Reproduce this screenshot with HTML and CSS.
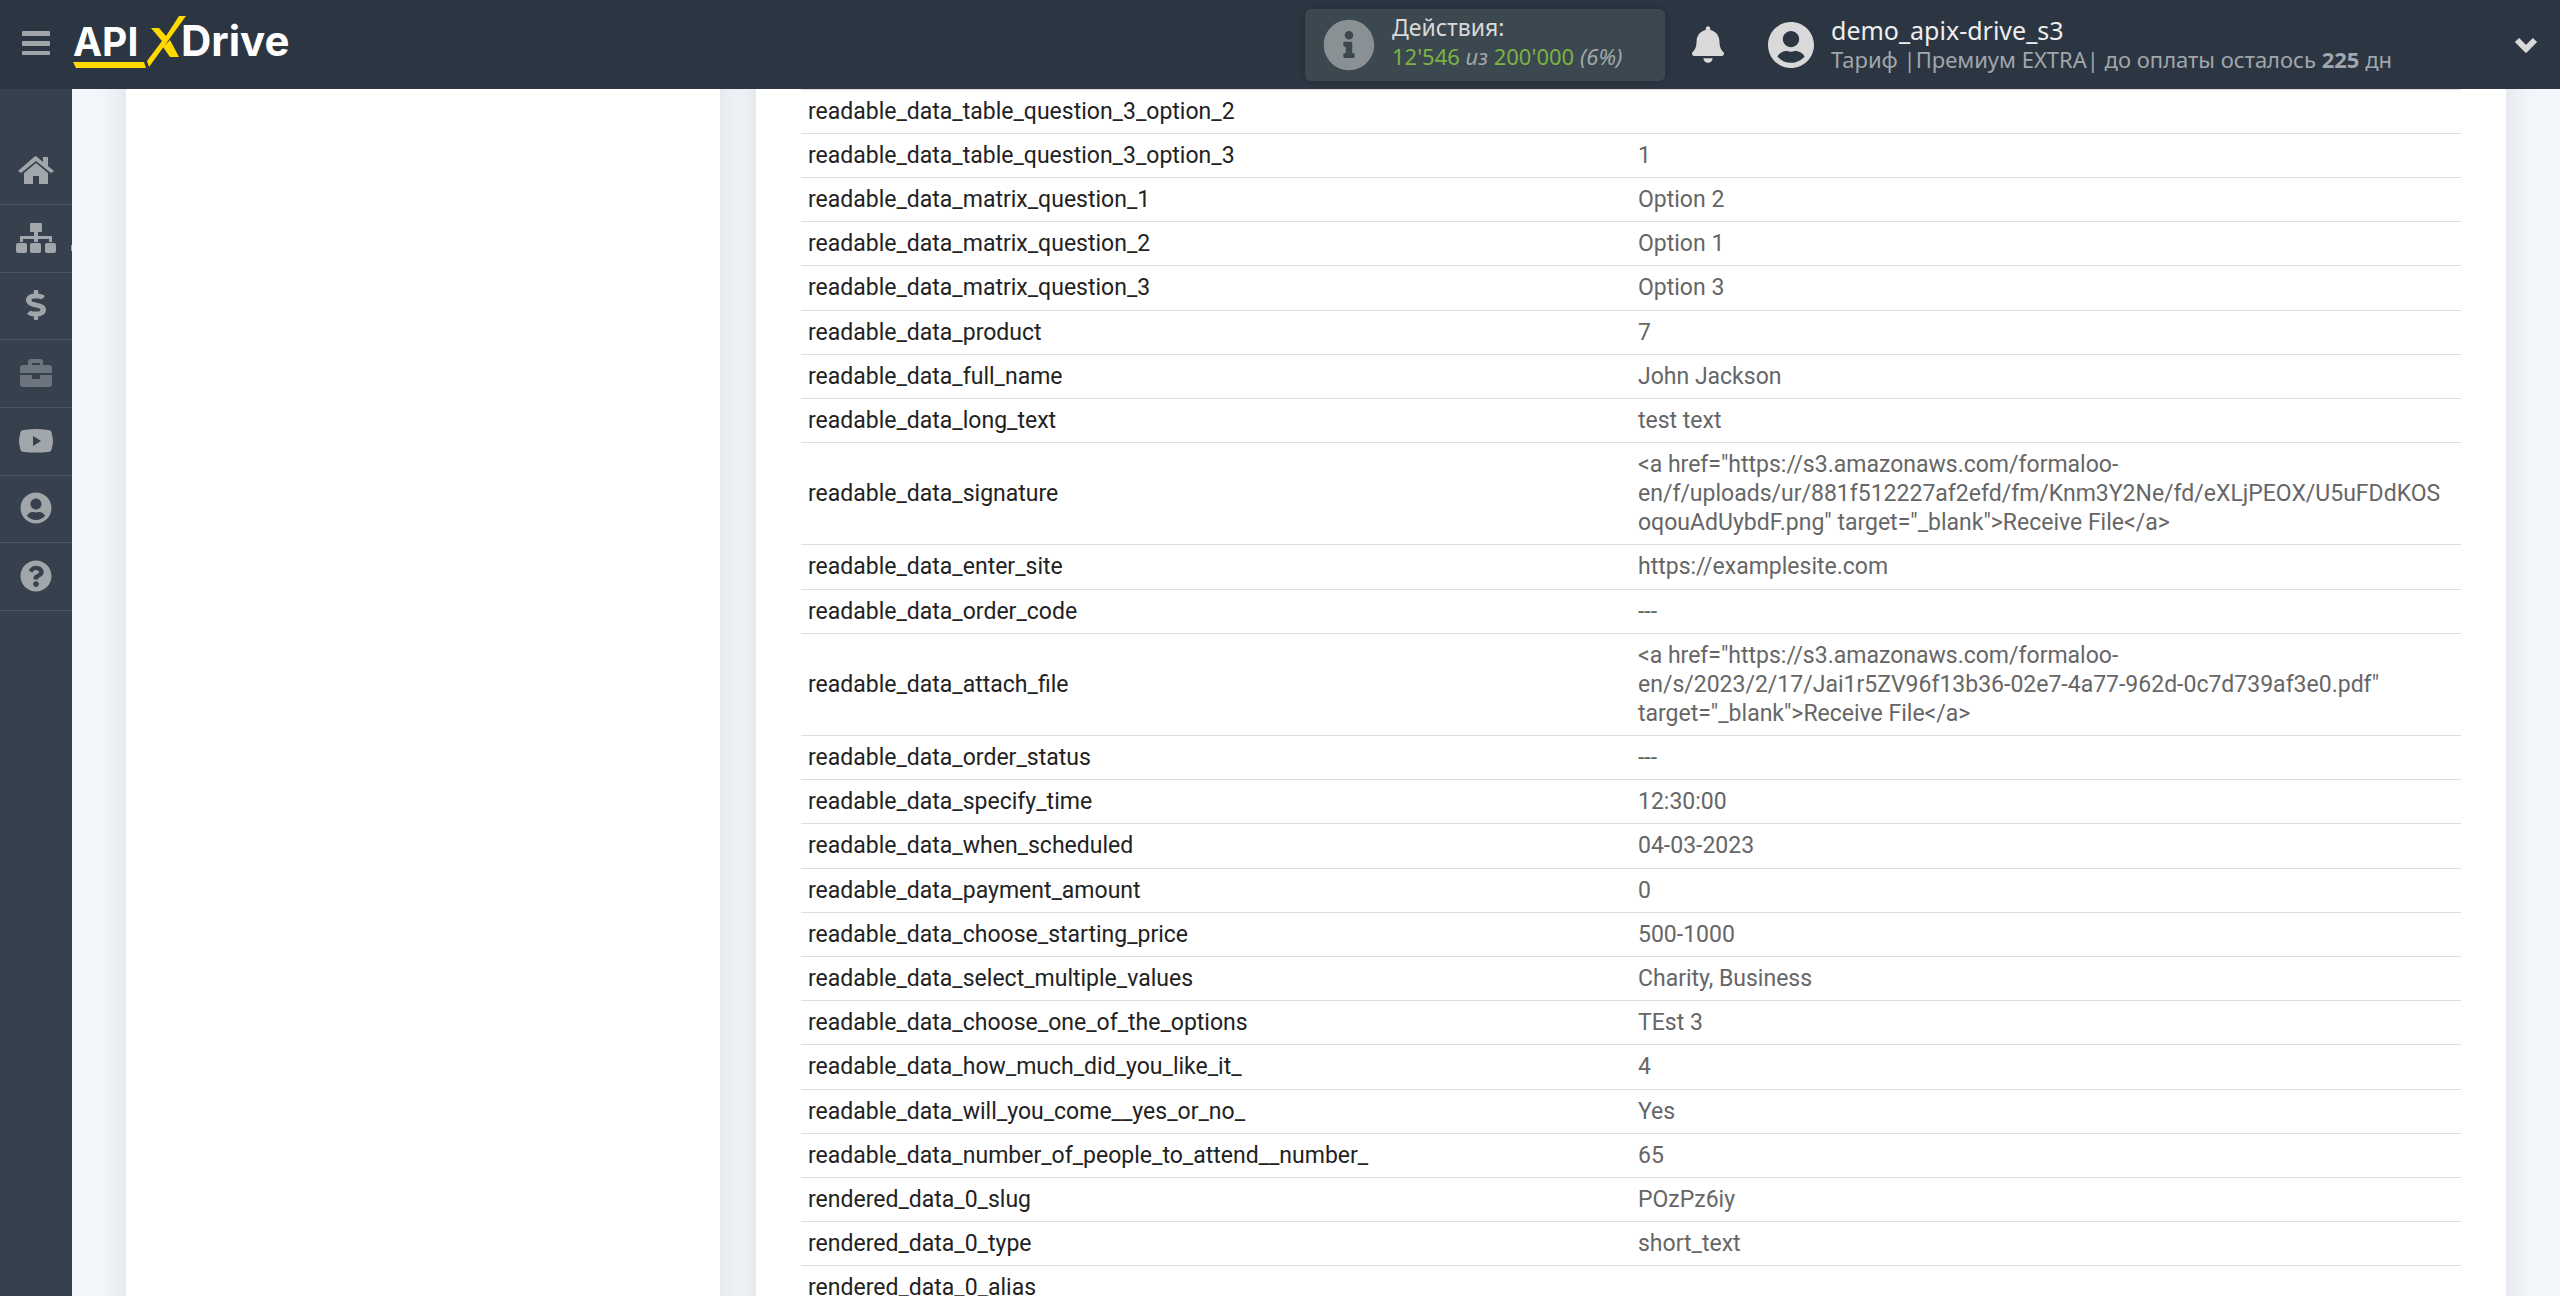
FILE: index.html
```html
<!DOCTYPE html>
<html lang="ru">
<head>
<meta charset="utf-8">
<title>ApiX-Drive</title>
<link rel="stylesheet" href="styles.css">
</head>
<body>
<header class="topbar">
  <button class="menu-toggle" type="button" aria-label="Меню">
    <svg width="28" height="24" viewBox="0 0 28 24"><rect width="28" height="5" rx="1"/><rect y="10" width="28" height="5" rx="1"/><rect y="20" width="28" height="4" rx="1"/></svg>
  </button>
  <a class="logo" href="#" aria-label="APIXDrive">
    <svg width="224" height="56" viewBox="0 0 224 56">
      <text class="logo-text" x="0" y="43">API</text>
      <text class="logo-text logo-text-wide" x="108" y="43">Drive</text>
      <path class="logo-mark" d="M0 49H71L73 55H3ZM106 3H113L76 54L74 48L89 28L78 15H86L93 23ZM97 27L106 44H97L90 34Z"/>
    </svg>
  </a>
  <section class="usage">
    <svg class="usage-icon" width="52" height="52" viewBox="0 0 512 512"><path d="M256 8C119 8 8 119 8 256s111 248 248 248 248-111 248-248S393 8 256 8zm0 110c23.200 0 42 18.800 42 42s-18.800 42-42 42-42-18.800-42-42 18.800-42 42-42zm56 254c0 6.600-5.400 12-12 12h-88c-6.600 0-12-5.400-12-12v-24c0-6.600 5.400-12 12-12h12v-64h-12c-6.600 0-12-5.400-12-12v-24c0-6.600 5.400-12 12-12h64c6.600 0 12 5.400 12 12v100h12c6.600 0 12 5.400 12 12z"/></svg>
    <div class="lines">
      <span class="light">Действия:</span>
      <span><b class="num">12'546</b> <i>из</i> <b class="num">200'000</b> <i>(6%)</i></span>
    </div>
  </section>
  <button class="bell" type="button" aria-label="Уведомления">
    <svg width="32" height="37" viewBox="0 0 448 512"><path d="M224 512c35.320 0 63.970-28.650 63.970-64H160.030c0 35.350 28.650 64 63.970 64zm215.390-149.710c-19.320-20.760-55.470-51.990-55.470-154.290 0-77.700-54.480-139.900-127.940-155.160V32c0-17.670-14.320-32-31.980-32s-31.980 14.330-31.980 32v20.840C118.560 68.100 64.080 130.300 64.080 208c0 102.300-36.150 133.530-55.470 154.290-6 6.450-8.660 14.160-8.610 21.710.110 16.400 12.980 32 32.100 32h383.800c19.120 0 32-15.600 32.100-32 .050-7.550-2.610-15.270-8.610-21.710z"/></svg>
  </button>
  <section class="account">
    <svg width="46" height="48" viewBox="0 0 496 512"><path d="M248 8C111 8 0 119 0 256s111 248 248 248 248-111 248-248S385 8 248 8zm0 96c48.600 0 88 39.400 88 88s-39.400 88-88 88-88-39.400-88-88 39.400-88 88-88zm0 344c-58.700 0-111.300-26.600-146.500-68.200 18.800-35.400 55.600-59.800 98.500-59.800 2.400 0 4.800.4 7.100 1.100 13 4.200 26.600 6.900 40.900 6.900 14.300 0 28-2.700 40.900-6.900 2.300-.7 4.700-1.100 7.100-1.100 42.900 0 79.700 24.400 98.500 59.800C359.300 421.400 306.700 448 248 448z"/></svg>
    <div class="lines">
      <span class="name">demo_apix-drive_s3</span>
      <span>Тариф |Премиум EXTRA| до оплаты осталось <strong>225</strong> дн</span>
    </div>
  </section>
  <button class="expand" type="button" aria-label="Развернуть">
    <svg width="24" height="17" viewBox="0 0 24 17"><path d="M3 4L12 13L21 4"/></svg>
  </button>
</header>
<div class="shell">
  <nav class="sidebar">
    <a href="#" aria-label="Главная"><svg width="36" height="28" viewBox="0 0 36 28"><path d="M18 0L25 6V1H30V10L36 15L33 17L18 5L3 17L0 15L16 1Q18 0 18 0ZM18 7L30 17V28H21V20H15V28H6V17Z"/></svg></a>
    <a class="has-sub" href="#" aria-label="Связи"><svg width="40" height="32" viewBox="0 0 40 32"><rect x="14" y="1" width="12" height="9" rx="1"/><path d="M18 9H22V14H36V20H33V17H22V20H18V17H7V20H4V14H18Z"/><rect x="0" y="21" width="11" height="10" rx="2"/><rect x="14" y="21" width="11" height="10" rx="2"/><rect x="29" y="21" width="11" height="10" rx="2"/></svg></a>
    <a href="#" aria-label="Оплата"><svg width="20" height="30" viewBox="0 0 288 512" preserveAspectRatio="none"><path d="M209.200 233.400l-108-31.600C88.700 198.200 80 186.500 80 173.500c0-16.300 13.200-29.500 29.500-29.500h66.300c12.200 0 24.200 3.700 34.200 10.500 6.100 4.100 14.300 3.100 19.500-2l34.800-34c7.100-6.900 6.100-18.400-1.800-24.500C238 74.800 207.400 64.100 176 64V16c0-8.800-7.200-16-16-16h-32c-8.800 0-16 7.200-16 16v48h-2.500C45.800 64-5.400 118.700.500 183.600c4.200 46.100 39.400 83.600 83.800 96.600l102.500 30c12.500 3.700 21.200 15.300 21.200 28.300 0 16.300-13.200 29.500-29.500 29.500h-66.300C100 368 88 364.300 78 357.500c-6.100-4.100-14.300-3.100-19.500 2l-34.800 34c-7.100 6.900-6.100 18.400 1.800 24.500 24.500 19.200 55.100 29.900 86.500 30v48c0 8.800 7.200 16 16 16h32c8.800 0 16-7.200 16-16v-48.200c46.600-.9 90.300-28.600 105.700-72.700 21.500-61.600-14.600-124.800-72.500-141.700z"/></svg></a>
    <a class="dim" href="#" aria-label="Проекты"><svg width="32" height="28" viewBox="0 0 32 28"><path d="M8 6V3Q8 0 11 0H20Q23 0 23 3V6H29Q32 6 32 9V14H0V9Q0 6 3 6ZM12 6H20V4H12ZM0 16H12V20H20V16H32V25Q32 28 29 28H3Q0 28 0 25Z"/></svg></a>
    <a href="#" aria-label="Видео"><svg width="34" height="24" viewBox="0 0 34 24"><path d="M5 1Q17-1 29 1Q33 1 33 6Q35 12 33 18Q33 23 29 23Q17 24 5 23Q1 23 1 18Q-1 12 1 6Q1 1 5 1ZM14 7V17L22 12Z"/></svg></a>
    <a href="#" aria-label="Профиль"><svg width="32" height="32" viewBox="0 0 496 512"><path d="M248 8C111 8 0 119 0 256s111 248 248 248 248-111 248-248S385 8 248 8zm0 96c48.600 0 88 39.400 88 88s-39.400 88-88 88-88-39.400-88-88 39.400-88 88-88zm0 344c-58.700 0-111.300-26.600-146.500-68.200 18.800-35.400 55.600-59.800 98.500-59.800 2.400 0 4.800.4 7.100 1.100 13 4.200 26.600 6.900 40.900 6.900 14.300 0 28-2.700 40.900-6.900 2.300-.7 4.700-1.100 7.100-1.100 42.900 0 79.700 24.400 98.500 59.800C359.300 421.400 306.700 448 248 448z"/></svg></a>
    <a href="#" aria-label="Помощь"><svg width="32" height="32" viewBox="0 0 512 512"><path d="M504 256c0 137-111 248-248 248S8 393 8 256 119 8 256 8s248 111 248 248zM262.700 90c-54.500 0-89.300 23-116.500 63.800-3.500 5.300-2.400 12.400 2.700 16.300l34.700 26.300c5.200 3.900 12.600 3 16.700-2.100 17.900-22.700 30.100-35.800 57.300-35.800 20.400 0 45.700 13.100 45.700 33 0 15-12.400 22.700-32.500 34C247.100 238.500 216 254.900 216 296v4c0 6.600 5.400 12 12 12h56c6.600 0 12-5.400 12-12v-1.300c0-28.500 83.200-29.600 83.200-106.700 0-58-60.200-102-116.500-102zM256 338c-25.400 0-46 20.600-46 46s20.600 46 46 46 46-20.600 46-46-20.600-46-46-46z"/></svg></a>
  </nav>
  <main class="content">
    <aside class="card"></aside>
    <section class="card data-card">
      <table class="data">
        <tbody>
          <tr><th scope="row">readable_data_table_question_3_option_2</th><td></td></tr>
          <tr><th scope="row">readable_data_table_question_3_option_3</th><td>1</td></tr>
          <tr><th scope="row">readable_data_matrix_question_1</th><td>Option 2</td></tr>
          <tr><th scope="row">readable_data_matrix_question_2</th><td>Option 1</td></tr>
          <tr><th scope="row">readable_data_matrix_question_3</th><td>Option 3</td></tr>
          <tr><th scope="row">readable_data_product</th><td>7</td></tr>
          <tr><th scope="row">readable_data_full_name</th><td>John Jackson</td></tr>
          <tr><th scope="row">readable_data_long_text</th><td>test text</td></tr>
          <tr><th scope="row">readable_data_signature</th><td>&lt;a href="https://s3.amazonaws.com/formaloo-<br>en/f/uploads/ur/881f512227af2efd/fm/Knm3Y2Ne/fd/eXLjPEOX/U5uFDdKOS<br>oqouAdUybdF.png" target="_blank"&gt;Receive File&lt;/a&gt;</td></tr>
          <tr><th scope="row">readable_data_enter_site</th><td>https://examplesite.com</td></tr>
          <tr><th scope="row">readable_data_order_code</th><td>---</td></tr>
          <tr><th scope="row">readable_data_attach_file</th><td>&lt;a href="https://s3.amazonaws.com/formaloo-<br>en/s/2023/2/17/Jai1r5ZV96f13b36-02e7-4a77-962d-0c7d739af3e0.pdf"<br>target="_blank"&gt;Receive File&lt;/a&gt;</td></tr>
          <tr><th scope="row">readable_data_order_status</th><td>---</td></tr>
          <tr><th scope="row">readable_data_specify_time</th><td>12:30:00</td></tr>
          <tr><th scope="row">readable_data_when_scheduled</th><td>04-03-2023</td></tr>
          <tr><th scope="row">readable_data_payment_amount</th><td>0</td></tr>
          <tr><th scope="row">readable_data_choose_starting_price</th><td>500-1000</td></tr>
          <tr><th scope="row">readable_data_select_multiple_values</th><td>Charity, Business</td></tr>
          <tr><th scope="row">readable_data_choose_one_of_the_options</th><td>TEst 3</td></tr>
          <tr><th scope="row">readable_data_how_much_did_you_like_it_</th><td>4</td></tr>
          <tr><th scope="row">readable_data_will_you_come__yes_or_no_</th><td>Yes</td></tr>
          <tr><th scope="row">readable_data_number_of_people_to_attend__number_</th><td>65</td></tr>
          <tr><th scope="row">rendered_data_0_slug</th><td>POzPz6iy</td></tr>
          <tr><th scope="row">rendered_data_0_type</th><td>short_text</td></tr>
          <tr><th scope="row">rendered_data_0_alias</th><td></td></tr>
        </tbody>
      </table>
    </section>
  </main>
</div>
</body>
</html>
```
FILE: styles.css
```css
* { box-sizing: border-box; }

body {
  margin: 0;
  height: 100vh;
  overflow: hidden;
  display: flex;
  flex-direction: column;
  background: #f3f6fb;
  font-family: Roboto, "Liberation Sans", sans-serif;
  font-size: 23px;
  line-height: 29px;
}

svg { display: block; flex: none; fill: currentColor; }

button {
  padding: 0;
  border: 0;
  background: none;
  color: inherit;
}

/* Top bar */
.topbar {
  position: relative;
  z-index: 1;
  flex: none;
  display: flex;
  align-items: center;
  height: 89px;
  padding: 0 22px;
  background: #2b3642;
  color: #d9d9d9;
  font-family: "Noto Sans", "Open Sans", sans-serif;
  font-size: 22px;
}

.menu-toggle { color: #a1a6ab; margin: 0 23px 4px 0; }
.logo { margin-bottom: 7px; }
.logo-text {
  fill: #fff;
  font-family: Inter, sans-serif;
  font-size: 39px;
  font-weight: 700;
}
.logo-text-wide { font-size: 42px; }
.logo-mark { fill: #ffd900; }

.usage {
  display: flex;
  align-items: center;
  gap: 17px;
  width: 360px;
  height: 72px;
  margin-left: auto;
  padding: 0 18px;
  border-radius: 6px;
  background: #3b4850;
  box-shadow: 0 0 6px rgba(0, 0, 0, .15);
}
.usage-icon { color: #8a9194; }

.lines {
  display: flex;
  flex-direction: column;
  color: #a1a6ab;
  white-space: nowrap;
}
.usage .lines { margin-bottom: 6px; }
.light { color: #d9d9d9; font-size: 23px; }
.name { color: #eee; font-size: 25px; }
.num { color: #7cb342; font-weight: 400; }

.bell { margin: 0 44px 0 27px; }
.account {
  display: flex;
  align-items: center;
  gap: 17px;
  width: 746px;
}
.expand svg {
  fill: none;
  stroke: currentColor;
  stroke-width: 6;
}

/* Layout below the bar */
.shell { flex: 1; display: flex; min-height: 0; }

.sidebar {
  flex: none;
  width: 72px;
  padding-top: 48px;
  background: #36414d;
  color: #a1a6ab;
}
.sidebar a {
  position: relative;
  display: flex;
  align-items: center;
  justify-content: center;
  height: 68px;
  padding-bottom: 2px;
  border-bottom: 1px solid #4a5561;
  color: inherit;
}
.sidebar a:nth-child(3n) { height: 67px; }
.sidebar .dim { color: #6c757e; }
.sidebar .has-sub::after {
  content: "";
  position: absolute;
  right: 0;
  bottom: 21px;
  width: 1px;
  height: 6px;
  background: currentColor;
}

.content {
  flex: 1;
  display: grid;
  grid-template-columns: 594fr 1750fr;
  gap: 36px;
  min-width: 0;
  padding: 0 54px;
  overflow: hidden;
}

/* Cards run on above and below the visible part of the page */
.card {
  margin-top: -45px;
  padding: 45px;
  background: #fff;
  box-shadow: 0 0 30px rgba(0, 0, 0, .11);
}

/* Data table */
.data {
  width: 100%;
  table-layout: fixed;
  border-collapse: separate;
  border-spacing: 0;
  color: #666;
}
.data th,
.data td {
  height: 44px;
  padding: 7px;
  border-top: 1px solid #dedede;
  text-align: left;
  vertical-align: middle;
}
.data th { color: #222; font-weight: 400; }
.data tr:nth-child(5n) > * { padding-bottom: 8px; }
```
